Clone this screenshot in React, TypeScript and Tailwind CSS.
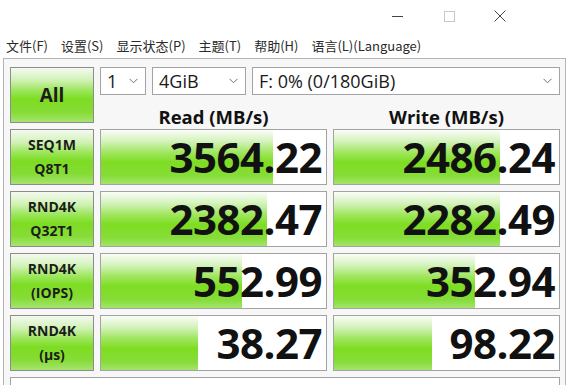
import React from "react";

const green =
  "bg-[linear-gradient(to_bottom,#f4faf0_0%,#d2f2b8_22%,#9be65a_42%,#7ddc22_58%,#86dc36_82%,#a6e470_100%)]";

function Label({ a, b }: { a: string; b?: string }) {
  return (
    <div
      className={`border border-[#8c8c8c] ${green} flex flex-col items-center justify-center text-[14px] font-bold leading-[24px] text-[#1c1c1c]`}
    >
      <span>{a}</span>
      {b && <span>{b}</span>}
    </div>
  );
}

function Cell({ value, fill }: { value: string; fill: number }) {
  return (
    <div className="relative border border-[#a3a3a3] bg-white overflow-hidden">
      <div
        className="h-full bg-[linear-gradient(to_bottom,#fafdf8_0%,#d6f3bf_20%,#9fe65e_42%,#7edd22_60%,#86dd38_85%,#a4e46c_100%)]"
        style={{ width: `${fill}px` }}
      />
      <div className="absolute inset-0 flex items-center justify-end pr-[4px] text-[42px] font-bold text-[#111] leading-none tracking-[-0.5px]">
        {value}
      </div>
    </div>
  );
}

function Chevron() {
  return (
    <svg width="9" height="6" viewBox="0 0 9 6" className="shrink-0">
      <path d="M0.5 0.8 L4.5 4.8 L8.5 0.8" fill="none" stroke="#707070" strokeWidth="1" />
    </svg>
  );
}

function Select({ w, text }: { w: string; text: string }) {
  return (
    <div
      className={`${w} h-[28px] border border-[#a3a3a3] bg-white flex items-center justify-between pl-[6px] pr-[7px] text-[18px] text-[#1a1a1a]`}
    >
      <span>{text}</span>
      <Chevron />
    </div>
  );
}

export default function App() {
  return (
    <div
      className="w-[569px] h-[385px] bg-white overflow-hidden"
      style={{ fontFamily: '"Open Sans", "Noto Sans CJK SC", sans-serif' }}
    >
      {/* title bar */}
      <div className="h-[32px] flex items-center justify-end">
        <div className="w-[52px] flex justify-center">
          <div className="w-[11px] h-[1px] bg-[#444]" />
        </div>
        <div className="w-[52px] flex justify-center">
          <div className="w-[11px] h-[11px] border border-[#c8c8c8]" />
        </div>
        <div className="w-[52px] flex justify-center pr-[2px]">
          <svg width="12" height="12" viewBox="0 0 12 12">
            <path d="M0.5 0.5 L11.5 11.5 M11.5 0.5 L0.5 11.5" stroke="#444" strokeWidth="1" />
          </svg>
        </div>
        <div className="w-[42px]" />
      </div>
      {/* menu */}
      <div
        className="h-[26px] flex items-center gap-[13px] pl-[6px] pt-[2px] text-[13px] text-[#2a2a2a]"
        style={{ fontFamily: '"Noto Sans CJK SC", sans-serif' }}
      >
        <span>文件(F)</span>
        <span>设置(S)</span>
        <span>显示状态(P)</span>
        <span>主题(T)</span>
        <span>帮助(H)</span>
        <span>语言(L)(Language)</span>
      </div>
      {/* frame */}
      <div className="ml-[3px] mr-[3px] border-t border-l border-r border-[#b4b4b4] bg-[#f7f7f7] h-[400px] pl-[6px] pt-[8px]">
        <div className="grid grid-cols-[84px_227px_227px] auto-rows-[56px] gap-x-[6px] gap-y-[6px]">
          <div
            className={`border border-[#8c8c8c] ${green} flex items-center justify-center text-[19px] font-bold text-[#1c1c1c]`}
          >
            All
          </div>
          <div className="col-span-2 flex flex-col">
            <div className="flex gap-[6px]">
              <Select w="w-[46px]" text="1" />
              <Select w="w-[94px]" text="4GiB" />
              <Select w="w-[308px]" text="F: 0% (0/180GiB)" />
            </div>
            <div className="flex-1 grid grid-cols-2 gap-x-[6px] items-end translate-y-[6px]">
              <div className="text-center text-[18.5px] font-bold text-[#111] leading-[24px]">Read (MB/s)</div>
              <div className="text-center text-[18.5px] font-bold text-[#111] leading-[24px]">Write (MB/s)</div>
            </div>
          </div>

          <Label a="SEQ1M" b="Q8T1" />
          <Cell value="3564.22" fill={172} />
          <Cell value="2486.24" fill={166} />

          <Label a="RND4K" b="Q32T1" />
          <Cell value="2382.47" fill={166} />
          <Cell value="2282.49" fill={166} />

          <Label a="RND4K" b="(IOPS)" />
          <Cell value="552.99" fill={141} />
          <Cell value="352.94" fill={141} />

          <Label a="RND4K" b="(μs)" />
          <Cell value="38.27" fill={97} />
          <Cell value="98.22" fill={98} />

          <div className="col-span-3 h-[30px] border border-[#a3a3a3] bg-white" />
        </div>
      </div>
    </div>
  );
}
